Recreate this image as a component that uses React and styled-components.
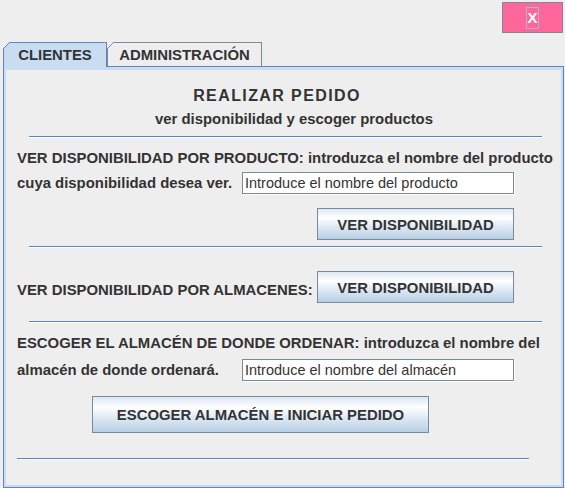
import React from "react";
import styled, { createGlobalStyle } from "styled-components";

const FONT = `"Liberation Sans", Arial, sans-serif`;
const TEXT = "#333333";
const PRIMARY = "#6382bf";
const DARK = "#7a8a99";
const SELECTED = "#c8ddf2";
const BG = "#eeeeee";
const BODY_SIZE = 14.9;

const Global = createGlobalStyle`
  html, body { margin: 0; padding: 0; background: ${BG}; }
  body { font-family: ${FONT}; color: ${TEXT}; }
  * { box-sizing: border-box; }
`;

const Frame = styled.div`
  width: 565px;
  height: 488px;
  overflow: hidden;
  background: ${BG};
  display: flex;
  flex-direction: column;
`;

const TopBar = styled.div`
  height: 42px;
  display: flex;
  justify-content: flex-end;
  align-items: flex-start;
  padding: 2px 2px 0 0;
`;

const CloseButton = styled.button`
  width: 61px;
  height: 31px;
  border: 1px solid ${DARK};
  background: #ff6699;
  display: flex;
  align-items: center;
  justify-content: center;
  padding: 0;
  font: bold 15px ${FONT};
  color: #ffffff;
`;

const FocusRing = styled.span`
  display: block;
  border: 1px solid #a3b8cc;
  line-height: 20px;
  padding: 0 0.5px;
`;

const TabStrip = styled.div`
  display: flex;
  align-items: flex-end;
  height: 24px;
  padding-left: 3px;
  position: relative;
  z-index: 1;
`;

const Tab = styled.div`
  position: relative;
  width: ${(p) => p.$w}px;
  height: ${(p) => (p.$active ? 25 : 24)}px;
  margin-bottom: ${(p) => (p.$active ? -1 : 0)}px;
  border: 1px solid ${(p) => (p.$active ? PRIMARY : DARK)};
  border-bottom: none;
  background: ${(p) => (p.$active ? SELECTED : BG)};
  display: flex;
  align-items: center;
  justify-content: center;
  padding-top: 1px;
  font-weight: bold;
  font-size: 14.9px;
  white-space: nowrap;
  &::before {
    content: "";
    position: absolute;
    left: -1px;
    top: -1px;
    width: 7px;
    height: 7px;
    background: linear-gradient(
      135deg,
      ${BG} 0 calc(50% - 0.7px),
      ${(p) => (p.$active ? PRIMARY : DARK)} calc(50% - 0.7px) calc(50% + 0.7px),
      transparent calc(50% + 0.7px)
    );
  }
`;

const Panel = styled.div`
  margin-left: 3px;
  width: 561px;
  height: 424px;
  border: 1px solid ${PRIMARY};
`;

const PanelBody = styled.div`
  height: 100%;
  border: 2px solid ${SELECTED};
  border-top-width: 3px;
  display: flex;
  flex-direction: column;
  align-items: flex-start;
`;

const Heading = styled.div`
  align-self: stretch;
  text-align: center;
  font-weight: bold;
  font-size: ${(p) => p.$size}px;
  letter-spacing: ${(p) => p.$spacing}px;
  line-height: ${(p) => p.$lh}px;
  margin-top: ${(p) => p.$mt}px;
  padding-left: ${(p) => Math.max(0, p.$offset * 2)}px;
  padding-right: ${(p) => Math.max(0, -p.$offset * 2)}px;
  white-space: nowrap;
`;

const Rule = styled.div`
  margin: ${(p) => p.$mt}px 0 0 ${(p) => p.$ml}px;
  width: ${(p) => p.$w}px;
  height: 2px;
  border-top: 1px solid ${PRIMARY};
  border-bottom: 1px solid #ffffff;
`;

const Text = styled.div`
  font-weight: bold;
  font-size: ${BODY_SIZE}px;
  line-height: 18px;
  margin-top: ${(p) => p.$mt || 0}px;
  padding-left: ${(p) => (p.$inset ? 11 : 0)}px;
  white-space: nowrap;
`;

const FormRow = styled.div`
  display: grid;
  grid-template-columns: ${(p) => p.$label}px auto;
  align-items: ${(p) => p.$align || "center"};
  padding-left: 11px;
  margin-top: ${(p) => p.$mt}px;
`;

const Field = styled.input`
  width: 272px;
  height: 22px;
  border: 1px solid ${DARK};
  box-shadow: 1px 1px 0 #ffffff;
  background: #ffffff;
  padding: 0 2px;
  margin: 0;
  font: 14.5px ${FONT};
  color: ${TEXT};
  outline: none;
`;

const Button = styled.button`
  width: ${(p) => p.$w}px;
  height: ${(p) => p.$h}px;
  margin: ${(p) => p.$mt || 0}px 0 0 ${(p) => p.$ml || 0}px;
  border: 1px solid ${DARK};
  background: linear-gradient(
    to bottom,
    #dde8f3 0%,
    #ffffff 30%,
    #dde8f3 60%,
    #b8cfe5 100%
  );
  padding: 2px 0 0 0;
  font: bold ${BODY_SIZE}px ${FONT};
  color: ${TEXT};
  white-space: nowrap;
`;

const Label = styled(Text)`
  align-self: start;
  margin-top: ${(p) => p.$mt || 0}px;
`;

export default function App() {
  return (
    <Frame>
      <Global />
      <TopBar>
        <CloseButton>
          <FocusRing>X</FocusRing>
        </CloseButton>
      </TopBar>
      <TabStrip>
        <Tab $active $w={104}>CLIENTES</Tab>
        <Tab $w={155}>ADMINISTRACIÓN</Tab>
      </TabStrip>
      <Panel>
        <PanelBody>
          <Heading $size={16} $spacing={1.4} $lh={20} $mt={16} $offset={-6.5}>
            REALIZAR PEDIDO
          </Heading>
          <Heading $size={BODY_SIZE} $spacing={0} $lh={18} $mt={4} $offset={10.5}>
            ver disponibilidad y escoger productos
          </Heading>
          <Rule $mt={8} $ml={23} $w={513} />

          <Text $inset $mt={11}>
            VER DISPONIBILIDAD POR PRODUCTO: introduzca el nombre del producto
          </Text>
          <FormRow $label={225} $mt={5}>
            <Text>cuya disponibilidad desea ver.</Text>
            <Field readOnly defaultValue="Introduce el nombre del producto" />
          </FormRow>
          <Button $w={197} $h={32} $mt={14} $ml={311}>
            VER DISPONIBILIDAD
          </Button>
          <Rule $mt={6} $ml={23} $w={513} />

          <FormRow $label={300} $mt={23} $align="start">
            <Label $mt={10}>VER DISPONIBILIDAD POR ALMACENES:</Label>
            <Button $w={197} $h={32}>
              VER DISPONIBILIDAD
            </Button>
          </FormRow>
          <Rule $mt={18} $ml={23} $w={513} />

          <Text $inset $mt={11}>
            ESCOGER EL ALMACÉN DE DONDE ORDENAR: introduzca el nombre del
          </Text>
          <FormRow $label={225} $mt={7}>
            <Text>almacén de donde ordenará.</Text>
            <Field readOnly defaultValue="Introduce el nombre del almacén" />
          </FormRow>
          <Button $w={337} $h={37} $mt={15} $ml={86}>
            ESCOGER ALMACÉN E INICIAR PEDIDO
          </Button>
          <Rule $mt={25} $ml={11} $w={512} />
        </PanelBody>
      </Panel>
    </Frame>
  );
}
